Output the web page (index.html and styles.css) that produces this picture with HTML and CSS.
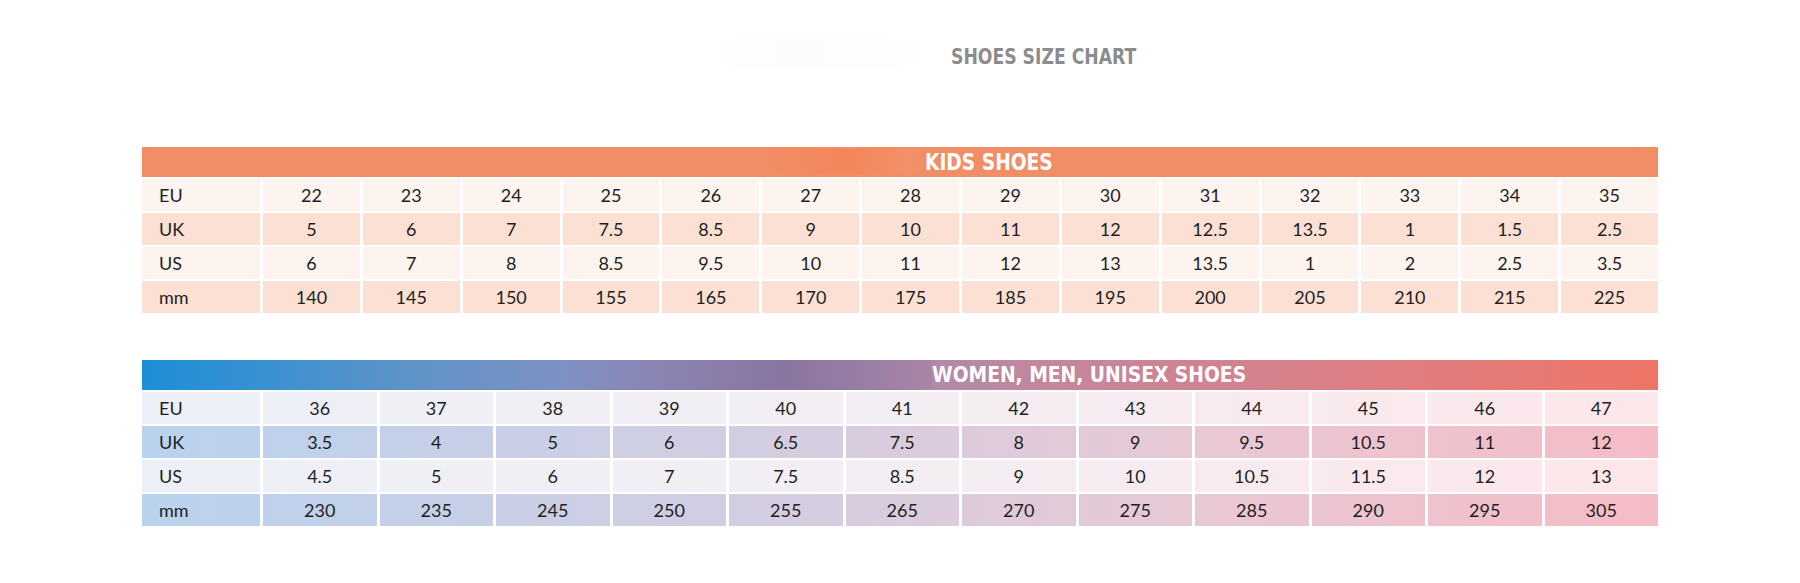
FILE: index.html
```html
<!DOCTYPE html>
<html>

<head>
    <title>Shoes Size Chart</title>
    <meta name="viewport" content="width=device-width, initial-scale=1">
    <link rel="stylesheet" href="styles.css">
</head>

<body>
    <div class="page">
        <div class="title"><span>SHOES SIZE CHART</span></div>

        <!-- Kids -->
        <div class="chart kids">
            <div class="head"><span>KIDS SHOES</span></div>
            <div class="row light">
                <div class="lbl">EU</div><div>22</div><div>23</div><div>24</div><div>25</div><div>26</div><div>27</div><div>28</div><div>29</div><div>30</div><div>31</div><div>32</div><div>33</div><div>34</div><div>35</div>
            </div>
            <div class="row dark">
                <div class="lbl">UK</div><div>5</div><div>6</div><div>7</div><div>7.5</div><div>8.5</div><div>9</div><div>10</div><div>11</div><div>12</div><div>12.5</div><div>13.5</div><div>1</div><div>1.5</div><div>2.5</div>
            </div>
            <div class="row light">
                <div class="lbl">US</div><div>6</div><div>7</div><div>8</div><div>8.5</div><div>9.5</div><div>10</div><div>11</div><div>12</div><div>13</div><div>13.5</div><div>1</div><div>2</div><div>2.5</div><div>3.5</div>
            </div>
            <div class="row dark">
                <div class="lbl">mm</div><div>140</div><div>145</div><div>150</div><div>155</div><div>165</div><div>170</div><div>175</div><div>185</div><div>195</div><div>200</div><div>205</div><div>210</div><div>215</div><div>225</div>
            </div>
        </div>

        <!-- Adults -->
        <div class="chart adults">
            <div class="head"><span>WOMEN, MEN, UNISEX SHOES</span></div>
            <div class="row light">
                <div class="lbl">EU</div><div>36</div><div>37</div><div>38</div><div>39</div><div>40</div><div>41</div><div>42</div><div>43</div><div>44</div><div>45</div><div>46</div><div>47</div>
            </div>
            <div class="row dark">
                <div class="lbl">UK</div><div>3.5</div><div>4</div><div>5</div><div>6</div><div>6.5</div><div>7.5</div><div>8</div><div>9</div><div>9.5</div><div>10.5</div><div>11</div><div>12</div>
            </div>
            <div class="row light">
                <div class="lbl">US</div><div>4.5</div><div>5</div><div>6</div><div>7</div><div>7.5</div><div>8.5</div><div>9</div><div>10</div><div>10.5</div><div>11.5</div><div>12</div><div>13</div>
            </div>
            <div class="row dark">
                <div class="lbl">mm</div><div>230</div><div>235</div><div>245</div><div>250</div><div>255</div><div>265</div><div>270</div><div>275</div><div>285</div><div>290</div><div>295</div><div>305</div>
            </div>
        </div>
    </div>
</body>

</html>
```

FILE: styles.css
```css
* {
    box-sizing: border-box;
}

body {
    margin: 0;
    background: #fff;
    font-family: Lato, "Open Sans", sans-serif;
    color: #1f1f1f;
}

.page {
    width: 1516px;
    margin-left: 142px;
}

.title {
    position: relative;
    margin-top: 44px;
    height: 26px;
    line-height: 26px;
    padding-left: 809px;
    font-family: "DejaVu Sans Condensed", "DejaVu Sans", sans-serif;
    font-stretch: condensed;
    font-weight: bold;
    font-size: 22px;
    color: #8c8c8c;
}

/* faint smear left of the title */
.title:before {
    content: "";
    position: absolute;
    left: 560px;
    width: 240px;
    top: -6px;
    height: 30px;
    background: linear-gradient(to right, rgba(240, 240, 236, 0), rgba(246, 246, 242, 0.35) 40%, rgba(248, 248, 244, 0));
}

.title span,
.head span {
    position: relative;
    display: inline-block;
    transform-origin: left center;
}

.title span {
    transform: scaleX(0.87);
}

.chart {
    margin-top: 77px;
}

.chart.adults {
    margin-top: 47px;
}

.head {
    position: relative;
    height: 30px;
    line-height: 30px;
    font-family: "DejaVu Sans Condensed", "DejaVu Sans", sans-serif;
    font-stretch: condensed;
    font-weight: bold;
    font-size: 23px;
    color: #fff;
}

/* brush strokes behind the headings */
.head:before {
    content: "";
    position: absolute;
    top: 0;
    bottom: 0;
}

.kids .head {
    background: #f28e66;
    padding-left: 783px;
}

.kids .head span {
    transform: scaleX(0.9);
}

.kids .head:before {
    left: 612px;
    width: 172px;
    top: 2px;
    bottom: 3px;
    background: linear-gradient(to right, rgba(246, 122, 74, 0), rgba(245, 120, 72, 0.4) 55%, rgba(247, 150, 110, 0.3) 90%, rgba(247, 150, 110, 0));
}

.adults .head {
    background: linear-gradient(to right, #1c8fd8 0%, #5f93c8 18%, #8a90c0 32%, #a58caf 48%, #c4879c 60%, #dc7f86 80%, #ee7465 100%);
    padding-left: 790px;
    font-size: 22px;
}

.adults .head span {
    transform: scaleX(0.945);
}

.adults .head:before {
    left: 420px;
    width: 370px;
    background: linear-gradient(to right, rgba(110, 90, 140, 0), rgba(120, 92, 140, 0.5) 60%, rgba(140, 100, 140, 0.15));
}

.row {
    display: grid;
    height: 32px;
    margin-top: 2px;
    line-height: 32px;
    font-size: 18px;
    text-align: center;
}

.row > div + div {
    border-left: 3px solid #fff;
}

.row .lbl {
    text-align: left;
    padding-left: 17px;
}

.kids .row {
    grid-template-columns: 118px repeat(14, 1fr);
}

.kids .light {
    background: #fdf3ef;
}

.kids .dark {
    background: #fce0d3;
}

.adults .row {
    grid-template-columns: 118px repeat(12, 1fr);
}

.adults .light {
    background: linear-gradient(to right, #edf0f8, #f3eef3 50%, #fde6ea);
}

.adults .dark {
    background: linear-gradient(to right, #b9d2ee, #d6cde0 45%, #e8c8d4 70%, #f5bcc6);
}
```
